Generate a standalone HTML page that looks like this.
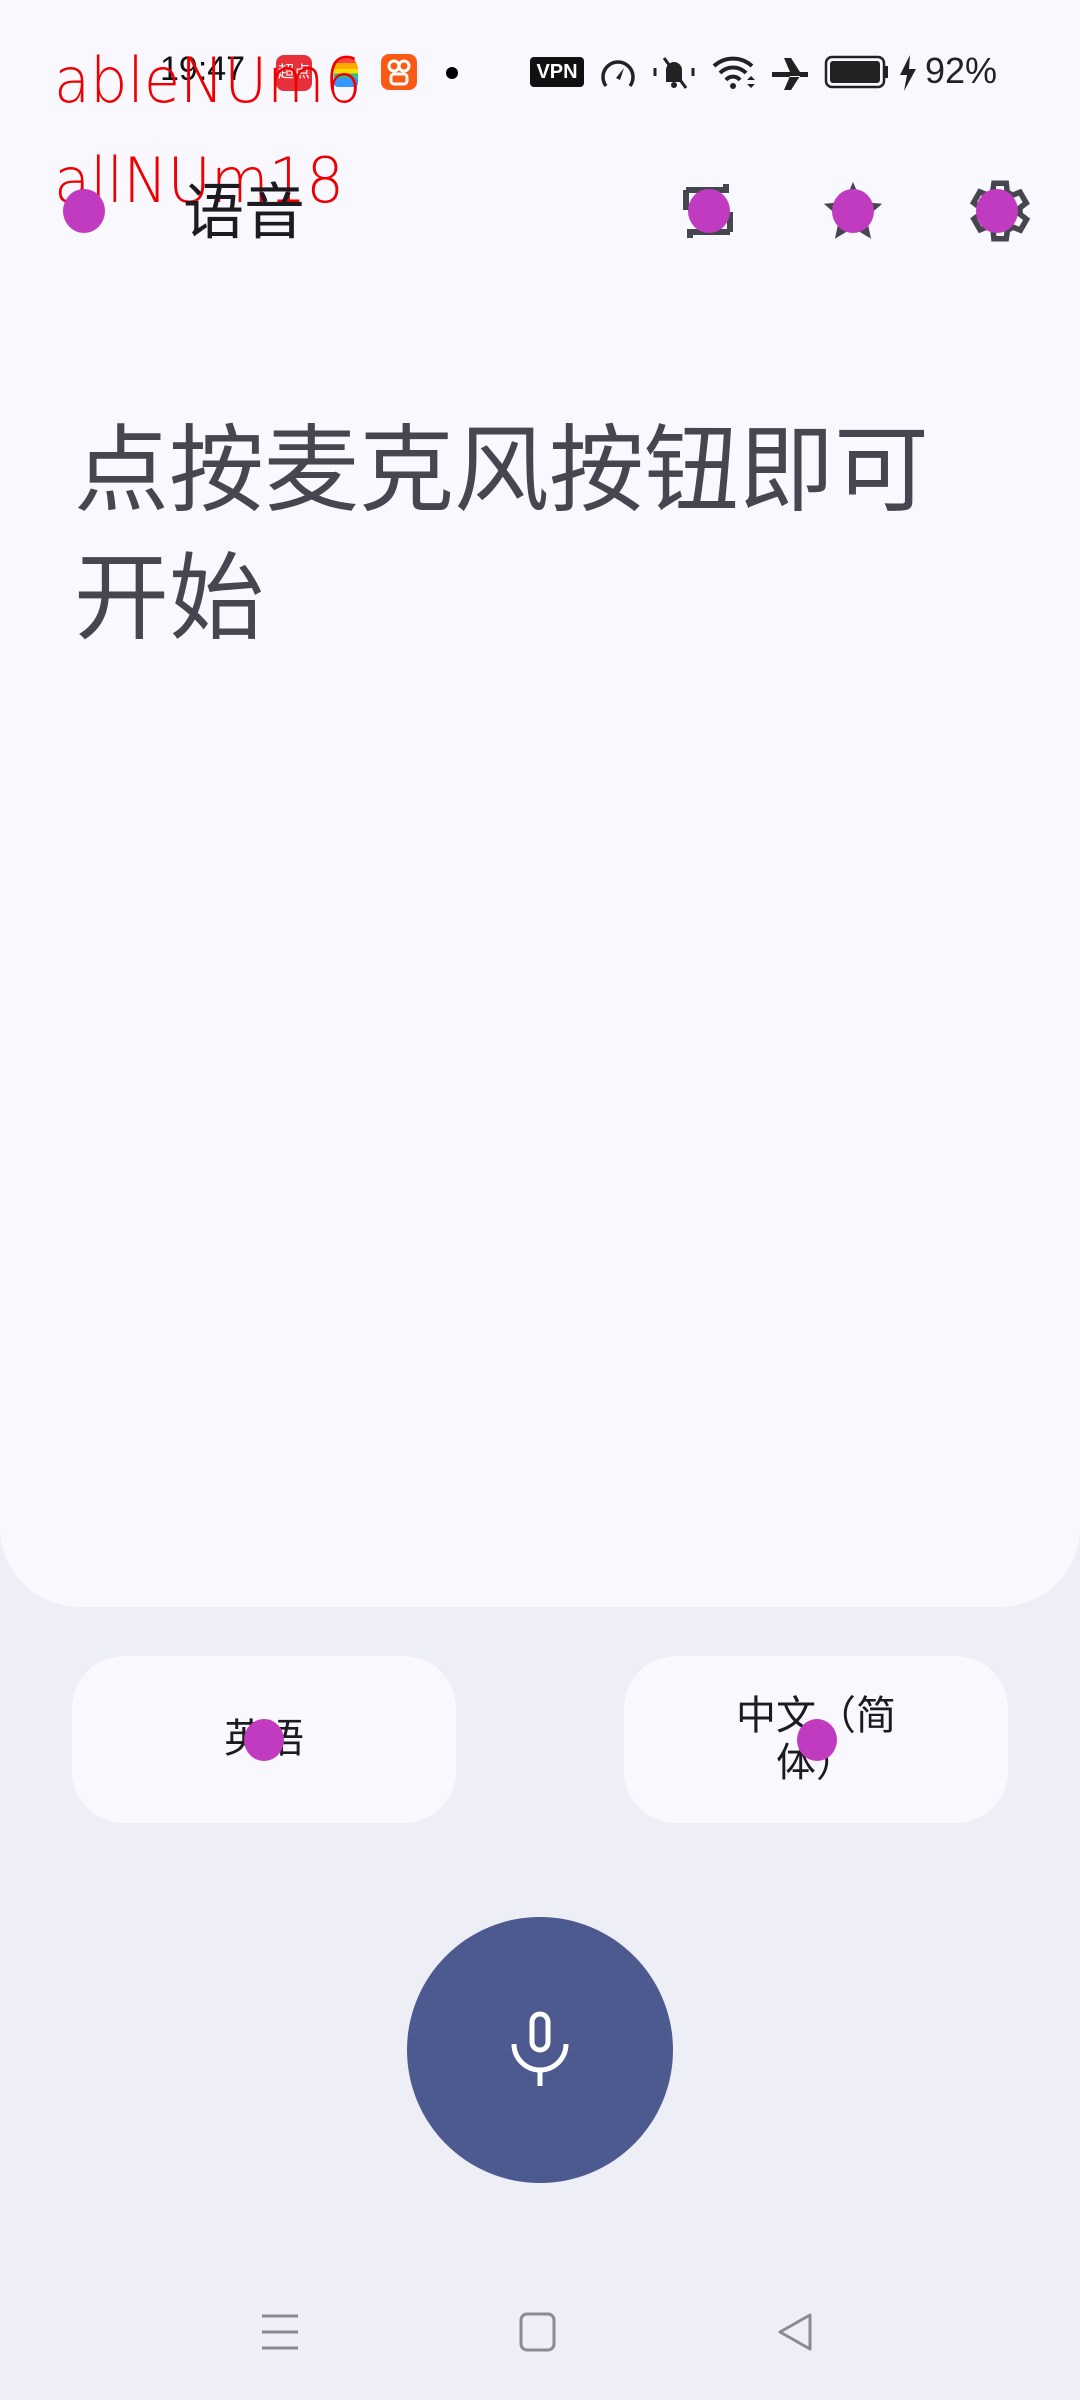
<!DOCTYPE html>
<html><head><meta charset="utf-8">
<style>
*{margin:0;padding:0;box-sizing:border-box}
body{width:1080px;height:2400px;background:#eeeef7;position:relative;overflow:hidden;font-family:"Liberation Sans","Noto Sans CJK SC",sans-serif}
.abs{position:absolute}
.card{left:0;top:0;width:1080px;height:1607px;background:#f8f8fe;border-radius:0 0 80px 80px}
.dot{position:absolute;width:42px;height:44px;border-radius:50%;background:#c03bc0}
.btn{position:absolute;top:1656px;width:384px;height:167px;background:#f8f8fe;border-radius:52px;display:flex;align-items:center;justify-content:center;text-align:center;color:#1b1b21;font-size:40px;line-height:47px}
</style></head><body>
<div class="abs card"></div>

<!-- status bar -->
<div class="abs" style="left:160px;top:50px;font-size:34px;color:#111">19:47</div>
<div class="abs" style="left:276px;top:55px;width:36px;height:36px;background:#e8303a;border-radius:8px;color:#fff;font-size:16px;line-height:36px;text-align:center">超点</div>
<div class="abs" style="left:334px;top:57px;width:24px;height:30px;border-radius:12px 12px 4px 4px;background:linear-gradient(#f44 0,#f44 20%,#fa0 20%,#fa0 40%,#fd0 40%,#fd0 55%,#3b8 55%,#3b8 70%,#39f 70%)"></div>
<div class="abs" style="left:381px;top:54px;width:36px;height:36px;background:#fa5a14;border-radius:8px"></div>
<svg class="abs" style="left:381px;top:54px" width="36" height="36" viewBox="0 0 36 36"><circle cx="13" cy="12" r="5" fill="none" stroke="#fff" stroke-width="3"/><circle cx="23" cy="12" r="5" fill="none" stroke="#fff" stroke-width="3"/><rect x="10" y="20" width="16" height="10" rx="3" fill="none" stroke="#fff" stroke-width="3"/></svg>
<div class="abs" style="left:446px;top:67px;width:12px;height:12px;border-radius:50%;background:#000"></div>
<div class="abs" style="left:530px;top:57px;width:54px;height:30px;background:#111;border-radius:4px;color:#fff;font-size:20px;font-weight:bold;line-height:30px;text-align:center">VPN</div>
<svg class="abs" style="left:598px;top:54px" width="40" height="36" viewBox="0 0 40 36"><path d="M8 32A15 15 0 1 1 32 32" fill="none" stroke="#222" stroke-width="3.5"/><path d="M18 24l8-10-4 12z" fill="#222"/></svg>
<svg class="abs" style="left:650px;top:54px" width="48" height="36" viewBox="0 0 48 36"><path d="M16 28V16a8 8 0 0 1 16 0v12z" fill="#222"/><circle cx="24" cy="31" r="3" fill="#222"/><path d="M14 4L36 34" stroke="#222" stroke-width="3"/><path d="M5 14v8M43 14v8" stroke="#222" stroke-width="3"/></svg>
<svg class="abs" style="left:712px;top:54px" width="46" height="36" viewBox="0 0 46 36"><path d="M2 12a28 28 0 0 1 38 0M8 19a18 18 0 0 1 26 0M14 26a9 9 0 0 1 14 0" fill="none" stroke="#222" stroke-width="4"/><circle cx="21" cy="32" r="3" fill="#222"/><path d="M35 26l4-4 4 4zM35 30l4 4 4-4z" fill="#222"/></svg>
<svg class="abs" style="left:770px;top:56px" width="40" height="34" viewBox="0 0 40 34"><path d="M2 16h36v5H2zM14 2h7l9 14H20zM14 34h7l9-14H20z" fill="#222"/></svg>
<svg class="abs" style="left:824px;top:55px" width="66" height="34" viewBox="0 0 66 34"><rect x="2" y="2" width="58" height="30" rx="6" fill="none" stroke="#222" stroke-width="2.5"/><rect x="6" y="6" width="50" height="22" rx="3" fill="#222"/><rect x="61" y="11" width="3" height="12" fill="#222"/></svg>
<svg class="abs" style="left:898px;top:55px" width="20" height="36" viewBox="0 0 20 36"><path d="M12 0L2 20h7l-3 16 12-22h-7z" fill="#222"/></svg>
<div class="abs" style="left:925px;top:50px;font-size:36px;color:#222">92%</div>

<!-- red overlay labels -->
<svg class="abs" style="left:0;top:0" width="400" height="220"><text x="54" y="102" font-family="DejaVu Sans, Liberation Sans, sans-serif" font-weight="200" font-size="62" fill="#e00" textLength="308" lengthAdjust="spacingAndGlyphs">ableNUm6</text><text x="54" y="202" font-family="DejaVu Sans, Liberation Sans, sans-serif" font-weight="200" font-size="62" fill="#e00" textLength="290" lengthAdjust="spacingAndGlyphs">allNUm18</text></svg>

<!-- app bar -->
<svg class="abs" style="left:60px;top:188px" width="48" height="48" viewBox="0 0 48 48"><path d="M40 24H10M22 10L8 24l14 14" fill="none" stroke="#45464f" stroke-width="4"/></svg>
<div class="abs" style="left:183px;top:176px;font-size:61px;color:#1b1b21;line-height:72px">语音</div>
<svg class="abs" style="left:682px;top:182px" width="52" height="58" viewBox="0 0 52 58"><path d="M4 8h40V2M4 8v20M48 50H8v6M48 50V30" fill="none" stroke="#45464f" stroke-width="6"/></svg>
<svg class="abs" style="left:818px;top:176px" width="70" height="70" viewBox="0 0 24 24"><path d="M12 2l2.9 6.9 7.1.6-5.4 4.7 1.6 7.3L12 17.8 5.8 21.5l1.6-7.3L2 9.5l7.1-.6z" fill="#45464f"/></svg>
<svg class="abs" style="left:960px;top:174px" width="74" height="74" viewBox="0 0 24 24"><path d="M19.4 13a7.5 7.5 0 0 0 0-2l2.1-1.6-2-3.5-2.5 1a7 7 0 0 0-1.7-1L15 3h-4l-.4 2.8a7 7 0 0 0-1.7 1l-2.5-1-2 3.5L6.6 11a7.5 7.5 0 0 0 0 2l-2.1 1.6 2 3.5 2.5-1a7 7 0 0 0 1.7 1L11 21h4l.4-2.8a7 7 0 0 0 1.7-1l2.5 1 2-3.5z" fill="none" stroke="#45464f" stroke-width="1.8"/></svg>
<div class="dot" style="left:63px;top:189px"></div>
<div class="dot" style="left:688px;top:189px"></div>
<div class="dot" style="left:832px;top:189px"></div>
<div class="dot" style="left:976px;top:189px"></div>

<!-- prompt -->
<div class="abs" style="left:74px;top:407px;font-size:95px;line-height:128px;color:#45464f;width:900px">点按麦克风按钮即可<br>开始</div>

<!-- language buttons -->
<div class="btn" style="left:72px">英语</div>
<div class="btn" style="left:624px"><span style="width:180px;display:block">中文（简体）</span></div>
<div class="dot" style="left:244px;top:1719px;width:40px;height:42px"></div>
<div class="dot" style="left:797px;top:1719px;width:40px;height:42px"></div>

<!-- mic -->
<div class="abs" style="left:407px;top:1917px;width:266px;height:266px;border-radius:50%;background:#4d5a8f"></div>
<svg class="abs" style="left:508px;top:2010px" width="64" height="80" viewBox="0 0 64 80"><rect x="24" y="4" width="16" height="36" rx="8" fill="none" stroke="#fff" stroke-width="5"/><path d="M6 34a26 26 0 0 0 52 0" fill="none" stroke="#fff" stroke-width="5"/><path d="M32 58v18" stroke="#fff" stroke-width="5"/></svg>

<!-- nav bar -->
<svg class="abs" style="left:260px;top:2312px" width="40" height="40" viewBox="0 0 40 40"><path d="M2 4h36M2 20h36M2 36h36" stroke="#8a8a94" stroke-width="3"/></svg>
<svg class="abs" style="left:518px;top:2312px" width="40" height="40" viewBox="0 0 40 40"><rect x="3" y="2" width="33" height="36" rx="6" fill="none" stroke="#8a8a94" stroke-width="3"/></svg>
<svg class="abs" style="left:776px;top:2312px" width="40" height="40" viewBox="0 0 40 40"><path d="M34 3L4 20l30 17z" fill="none" stroke="#8a8a94" stroke-width="3" stroke-linejoin="round"/></svg>
</body></html>
